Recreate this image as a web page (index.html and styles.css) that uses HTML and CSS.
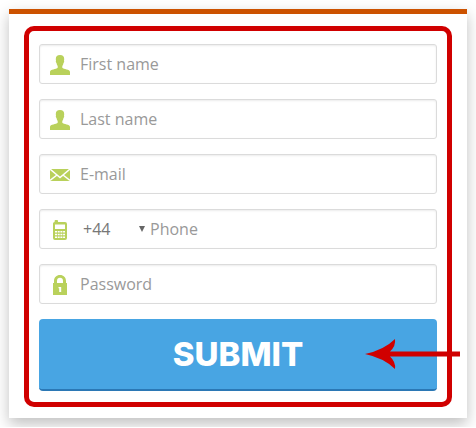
FILE: index.html
```
<!DOCTYPE html>
<html lang="en">
<head>
<meta charset="utf-8">
<meta name="viewport" content="width=device-width, initial-scale=1">
<title>Sign up</title>
<link rel="stylesheet" href="styles.css">
</head>
<body>
<main class="card">
  <form class="frame">
    <label class="field">
      <svg class="icon" viewBox="0 0 20 20" aria-hidden="true"><path d="M10 0C7.200 0 5.800 1.400 5.800 4c0 .6.100 1.200.2 1.700-.4.400-.1 1.900.5 2.300.2 1.200.6 2.200 1.200 3v1.800C6.500 14.400 0 14.200 0 17v3h20v-3c0-2.800-6.500-2.600-7.700-4.200V11c.6-.8 1-1.800 1.200-3 .6-.4.900-1.900.5-2.300.1-.5.200-1.100.2-1.700C14.200 1.400 12.800 0 10 0z"/></svg>
      <input class="input" type="text" placeholder="First name" aria-label="First name">
    </label>
    <label class="field">
      <svg class="icon" viewBox="0 0 20 20" aria-hidden="true"><path d="M10 0C7.200 0 5.800 1.400 5.800 4c0 .6.100 1.200.2 1.700-.4.400-.1 1.900.5 2.300.2 1.200.6 2.200 1.200 3v1.800C6.500 14.400 0 14.200 0 17v3h20v-3c0-2.800-6.500-2.600-7.700-4.200V11c.6-.8 1-1.800 1.200-3 .6-.4.900-1.900.5-2.300.1-.5.200-1.100.2-1.700C14.200 1.400 12.800 0 10 0z"/></svg>
      <input class="input" type="text" placeholder="Last name" aria-label="Last name">
    </label>
    <label class="field">
      <svg class="icon" viewBox="0 0 20 20" aria-hidden="true"><path d="M0 4h20v12H0z"/><path class="line" d="M0 4l10 8.500L20 4M0 15.500l7-5.500M20 15.500L13 10"/></svg>
      <input class="input" type="email" placeholder="E-mail" aria-label="E-mail">
    </label>
    <div class="field">
      <svg class="icon" viewBox="0 0 20 20" aria-hidden="true"><path fill-rule="evenodd" d="M5.500 0h1.600q.9 0 .9.900V2h7q2 0 2 2v14q0 2-2 2H5q-2 0-2-2V3.500q0-1.200 1.600-1.500V.9q0-.9.900-.9zM5 4.500V9h10V4.500zM5 11v1.500h2V11zm2.700 0v1.500h2V11zm2.700 0v1.500h2V11zm2.700 0v1.500H15V11zM5 13.700v1.500h2v-1.500zm2.700 0v1.500h2v-1.500zm2.700 0v1.500h2v-1.500zm2.700 0v1.500H15v-1.500zM5 16.400v1.500h2v-1.500zm2.700 0v1.500h2v-1.500zm2.700 0v1.500h2v-1.500zm2.700 0v1.500H15v-1.500z"/></svg>
      <span class="code">
        <select class="select" aria-label="Country code"><option>+44</option></select>
        <svg class="caret" viewBox="0 0 6 6" aria-hidden="true"><path d="M0 0h6L3 6z"/></svg>
      </span>
      <input class="input" type="tel" placeholder="Phone" aria-label="Phone">
    </div>
    <label class="field">
      <svg class="icon" viewBox="0 0 20 20" aria-hidden="true"><path fill-rule="evenodd" d="M3 8h1V6c0-3.600 2.500-6 6-6s6 2.400 6 6v2h1v12H3zm4 0h6V6c0-2-1.200-3.200-3-3.200S7 4 7 6zM8.500 12v1.300h.7V17h2v-5z"/></svg>
      <input class="input" type="password" placeholder="Password" aria-label="Password">
    </label>
    <button class="submit" type="submit">SUBMIT</button>
    <svg class="arrow" viewBox="0 0 95 30" aria-hidden="true"><path d="M0 15Q19 11 30 0q1 7-5 12.500h70v5H25Q31 23 30 30 19 19 0 15z"/></svg>
  </form>
</main>
</body>
</html>
```
FILE: styles.css
```
* {
  box-sizing: border-box;
}

body {
  margin: 0;
  padding: 9px;
  background: #fff;
  font-family: "Open Sans", sans-serif;
  font-size: 16px;
}

.card {
  padding: 12px 15px 11px;
  border-top: 5px solid #cc5200;
  background: #fff;
  box-shadow: 0 6px 14px rgba(0, 0, 0, 0.25);
}

.frame {
  position: relative;
  display: flex;
  flex-direction: column;
  gap: 15px;
  padding: 13px 10px 11px;
  border: 5px solid #d00000;
  border-radius: 10px;
}

.field {
  display: flex;
  align-items: center;
  height: 40px;
  padding: 0 10px;
  border: 1px solid #dbdbdb;
  border-radius: 3px;
  box-shadow: inset 0 1px 2px rgba(0, 0, 0, 0.08);
}

.icon {
  flex: none;
  width: 20px;
  height: 20px;
  margin: 2px 10px 0 0;
  fill: #b9d15b;
}

.line {
  fill: none;
  stroke: #fff;
  stroke-width: 1.5;
}

.input {
  flex: 1;
  min-width: 0;
  height: 100%;
  padding: 0;
  border: 0;
  outline: 0;
  background: none;
  color: #777;
  font: inherit;
}

.input::placeholder {
  color: #999;
  opacity: 1;
}

.code {
  display: flex;
  align-items: center;
  width: 70px;
  padding: 0 5px 0 3px;
}

.select {
  flex: 1;
  min-width: 0;
  padding: 0;
  border: 0;
  appearance: none;
  background: none;
  color: #777;
  font: inherit;
}

.caret {
  width: 6px;
  height: 6px;
  fill: #666;
}

.submit {
  height: 72px;
  padding: 0;
  border: 0;
  border-bottom: 2px solid #2b78b5;
  border-radius: 4px;
  background: #48a5e3;
  color: #fff;
  font-family: Inter, sans-serif;
  font-size: 33px;
  font-weight: 800;
}

.arrow {
  position: absolute;
  right: -13px;
  bottom: 33px;
  width: 95px;
  height: 30px;
  fill: #d00000;
}
```
